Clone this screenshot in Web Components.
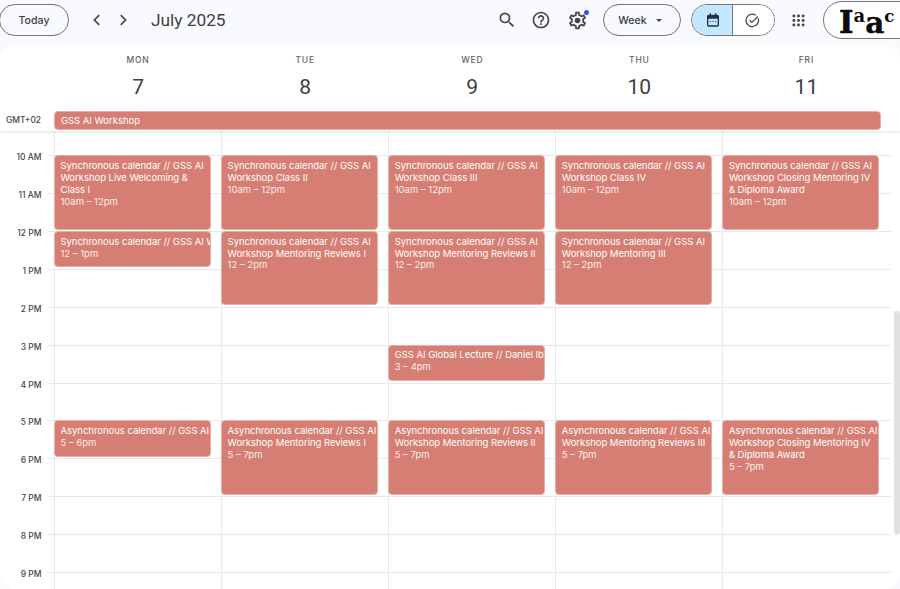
<!DOCTYPE html>
<html><head><meta charset="utf-8">
<style>
html,body{margin:0;padding:0;background:#f8fafd;overflow:hidden}
body{font-family:Inter,"Liberation Sans",sans-serif}
</style></head><body>
<gcal-app>
  <gcal-header slot="header"></gcal-header>
  <gcal-panel>
    <day-head name="MON" num="7"></day-head>
    <day-head name="TUE" num="8"></day-head>
    <day-head name="WED" num="9"></day-head>
    <day-head name="THU" num="10"></day-head>
    <day-head name="FRI" num="11"></day-head>
    <time-grid slot="grid">
      <day-col>
        <cal-event start="0" dur="2" time="10am – 12pm">Synchronous calendar // GSS AI Workshop Live Welcoming &amp; Class I</cal-event>
        <cal-event start="2" dur="1" nowrap time="12 – 1pm">Synchronous calendar // GSS AI Workshop</cal-event>
        <cal-event start="7" dur="1" nowrap time="5 – 6pm">Asynchronous calendar // GSS AI Workshop</cal-event>
      </day-col>
      <day-col>
        <cal-event start="0" dur="2" time="10am – 12pm">Synchronous calendar // GSS AI Workshop Class II</cal-event>
        <cal-event start="2" dur="2" time="12 – 2pm">Synchronous calendar // GSS AI Workshop Mentoring Reviews I</cal-event>
        <cal-event start="7" dur="2" time="5 – 7pm">Asynchronous calendar // GSS AI Workshop Mentoring Reviews I</cal-event>
      </day-col>
      <day-col>
        <cal-event start="0" dur="2" time="10am – 12pm">Synchronous calendar // GSS AI Workshop Class III</cal-event>
        <cal-event start="2" dur="2" time="12 – 2pm">Synchronous calendar // GSS AI Workshop Mentoring Reviews II</cal-event>
        <cal-event start="5" dur="1" nowrap time="3 – 4pm">GSS AI Global Lecture // Daniel Ibañez</cal-event>
        <cal-event start="7" dur="2" time="5 – 7pm">Asynchronous calendar // GSS AI Workshop Mentoring Reviews II</cal-event>
      </day-col>
      <day-col>
        <cal-event start="0" dur="2" time="10am – 12pm">Synchronous calendar // GSS AI Workshop Class IV</cal-event>
        <cal-event start="2" dur="2" time="12 – 2pm">Synchronous calendar // GSS AI Workshop Mentoring III</cal-event>
        <cal-event start="7" dur="2" time="5 – 7pm">Asynchronous calendar // GSS AI Workshop Mentoring Reviews III</cal-event>
      </day-col>
      <day-col>
        <cal-event start="0" dur="2" time="10am – 12pm">Synchronous calendar // GSS AI Workshop Closing Mentoring IV<br>&amp; Diploma Award</cal-event>
        <cal-event start="7" dur="2" time="5 – 7pm">Asynchronous calendar // GSS AI Workshop Closing Mentoring IV<br>&amp; Diploma Award</cal-event>
      </day-col>
    </time-grid>
  </gcal-panel>
</gcal-app>
<script>
const FONT='Inter,"Liberation Sans",sans-serif';
function def(name,html,extra){
  customElements.define(name,class extends HTMLElement{
    constructor(){super();this.attachShadow({mode:'open'});}
    connectedCallback(){
      const h=typeof html==='function'?html(this):html;
      this.shadowRoot.innerHTML=h;
      if(extra)extra(this);
    }
  });
}
const ICON={
 search:'<path d="M15.5 14h-.79l-.28-.27A6.471 6.471 0 0 0 16 9.5 6.5 6.5 0 1 0 9.5 16c1.61 0 3.09-.59 4.23-1.57l.27.28v.79l5 4.99L20.49 19l-4.99-5zm-6 0C7.01 14 5 11.99 5 9.5S7.01 5 9.5 5 14 7.01 14 9.5 11.99 14 9.5 14z"/>',
 help:'<path d="M11 18h2v-2h-2v2zm1-16C6.48 2 2 6.48 2 12s4.48 10 10 10 10-4.48 10-10S17.52 2 12 2zm0 18c-4.41 0-8-3.59-8-8s3.59-8 8-8 8 3.59 8 8-3.59 8-8 8zm0-14c-2.21 0-4 1.79-4 4h2c0-1.1.9-2 2-2s2 .9 2 2c0 2-3 1.75-3 5h2c0-2.25 3-2.5 3-5 0-2.21-1.79-4-4-4z"/>',
 gear:'<path d="M19.43 12.98c.04-.32.07-.64.07-.98 0-.34-.03-.66-.07-.98l2.11-1.65c.19-.15.24-.42.12-.64l-2-3.46c-.09-.16-.26-.25-.44-.25-.06 0-.12.01-.17.03l-2.49 1c-.52-.4-1.08-.73-1.69-.98l-.38-2.65C14.46 2.18 14.25 2 14 2h-4c-.25 0-.46.18-.49.42l-.38 2.65c-.61.25-1.17.59-1.69.98l-2.49-1c-.06-.02-.12-.03-.18-.03-.17 0-.34.09-.43.25l-2 3.46c-.13.22-.07.49.12.64l2.11 1.65c-.04.32-.07.65-.07.98 0 .33.03.66.07.98l-2.11 1.65c-.19.15-.24.42-.12.64l2 3.46c.09.16.26.25.44.25.06 0 .12-.01.17-.03l2.49-1c.52.4 1.08.73 1.69.98l.38 2.65c.03.24.24.42.49.42h4c.25 0 .46-.18.49-.42l.38-2.65c.61-.25 1.17-.59 1.69-.98l2.49 1c.06.02.12.03.18.03.17 0 .34-.09.43-.25l2-3.46c.12-.22.07-.49-.12-.64l-2.11-1.65zm-1.98-1.71c.04.31.05.52.05.73 0 .21-.02.43-.05.73l-.14 1.13.89.7 1.08.84-.7 1.21-1.27-.51-1.04-.42-.9.68c-.43.32-.84.56-1.25.73l-1.06.43-.16 1.13-.2 1.35h-1.4l-.19-1.35-.16-1.13-1.06-.43c-.43-.18-.83-.41-1.23-.71l-.91-.7-1.06.43-1.27.51-.7-1.21 1.08-.84.89-.7-.14-1.13c-.03-.31-.05-.54-.05-.74s.02-.43.05-.73l.14-1.13-.89-.7-1.08-.84.7-1.21 1.27.51 1.04.42.9-.68c.43-.32.84-.56 1.25-.73l1.06-.43.16-1.13.2-1.35h1.39l.19 1.35.16 1.13 1.06.43c.43.18.83.41 1.23.71l.91.7 1.06-.43 1.27-.51.7 1.21-1.07.85-.89.7.14 1.13z"/><circle cx="12" cy="12" r="3.2"/>',
 apps:[5.5,12,18.5].flatMap(y=>[5.5,12,18.5].map(x=>`<circle cx="${x}" cy="${y}" r="2.1"/>`)).join(''),
 left:'<path d="M15 5.5 8.5 12l6.5 6.5" fill="none" stroke="currentColor" stroke-width="2.2"/>',
 right:'<path d="M9 5.5 15.5 12 9 18.5" fill="none" stroke="currentColor" stroke-width="2.2"/>',
 cal:'<path d="M7 2h2v2h6V2h2v2h1.5A2.5 2.5 0 0 1 21 6.5v13a2.5 2.5 0 0 1-2.5 2.5h-13A2.5 2.5 0 0 1 3 19.5v-13A2.5 2.5 0 0 1 5.5 4H7V2zM5 10v9.5c0 .28.22.5.5.5h13a.5.5 0 0 0 .5-.5V10H5z"/><circle cx="8" cy="14" r="1"/><circle cx="12" cy="14" r="1"/><circle cx="16" cy="14" r="1"/>',
 task:'<path d="M21 8.4A10 10 0 1 1 17.3 3.6" fill="none" stroke="currentColor" stroke-width="2"/><path d="M7.5 11.5 11 15l9.5-9.5" fill="none" stroke="currentColor" stroke-width="2"/>'
};
const svg=(n,s,c)=>`<svg width="${s}" height="${s}" viewBox="0 0 24 24" fill="currentColor" style="color:${c};display:block">${ICON[n]}</svg>`;

def('gcal-app',`<style>
:host{display:flex;flex-direction:column;width:900px;height:589px;overflow:hidden;background:#f8fafd;position:relative;font-family:${FONT}}
</style><slot name="header"></slot><slot></slot>`);

def('gcal-header',`<style>
:host{display:flex;align-items:center;height:40px;margin-bottom:5px;flex:none;color:#1f1f1f}
.pill{display:flex;align-items:center;justify-content:center;box-sizing:border-box;height:32px;border:1px solid #747775;border-radius:16px;font-size:10.6px;font-weight:500;color:#3c4043;flex:none}
.today{width:70px;margin-left:-1px}
.ib{width:24px;height:24px;display:flex;align-items:center;justify-content:center;flex:none;position:relative}
.title{font-family:Roboto,sans-serif;font-size:17.3px;font-weight:400;color:#3c4043;margin-left:16px;flex:1}
.week{width:78px;gap:9px;padding-right:4px;margin-left:14px}
.caret{width:0;height:0;border-left:3.5px solid transparent;border-right:3.5px solid transparent;border-top:3.5px solid #444746}
.dot{position:absolute;width:5px;height:5px;border-radius:50%;background:#2a5bdc;top:1.5px;right:.5px}
.toggle{display:flex;box-sizing:border-box;width:84px;height:32px;border:1px solid #747775;border-radius:16px;overflow:hidden;margin-left:10px;flex:none}
.toggle div{flex:1;display:flex;align-items:center;justify-content:center}
.toggle .on{background:#c2e7ff;border-right:1px solid #747775;flex:none;width:41px;padding-left:2px;box-sizing:border-box}
.toggle .off{background:#fff;padding-right:2px}
.logoclip{width:77px;height:40px;margin-left:13px;overflow:hidden;flex:none;display:flex;align-items:center}
.logo{box-sizing:border-box;width:110px;height:38px;flex:none;border:1px solid #747775;border-radius:19px;background:#fff;padding-left:15px;font-family:"DejaVu Serif","Liberation Serif",serif;font-weight:700;color:#0b0b0b;line-height:28px;white-space:nowrap;font-size:0}
.logo .I{font-size:31px;-webkit-text-stroke:.6px #0b0b0b}
.logo .s{font-size:18px;vertical-align:10.5px}
.logo .c{font-size:16.5px;vertical-align:11px}
.logo .a{font-size:29.5px;-webkit-text-stroke:.4px #0b0b0b}
</style>
<div class="pill today">Today</div>
<div class="ib" style="margin-left:16px">${svg('left',18,'#444746')}</div>
<div class="ib" style="margin-left:2px">${svg('right',18,'#444746')}</div>
<div class="title">July 2025</div>
<div class="ib">${svg('search',20,'#444746')}</div>
<div class="ib" style="margin-left:10px">${svg('help',20,'#444746')}</div>
<div class="ib" style="margin-left:12px">${svg('gear',21,'#444746')}<span class="dot"></span></div>
<div class="pill week"><span>Week</span><span class="caret"></span></div>
<div class="toggle"><div class="on">${svg('cal',16,'#1d2f4f')}</div><div class="off">${svg('task',15,'#444746')}</div></div>
<div class="ib" style="margin-left:11px">${svg('apps',17,'#444746')}</div>
<div class="logoclip"><div class="logo"><span class="I">I</span><span class="s">a</span><span class="a">a</span><span class="c">c</span></div></div>`);

def('gcal-panel',`<style>
:host{display:flex;flex-direction:column;flex:1;min-height:0;background:#fff;border-radius:16px;overflow:hidden;position:relative}
.heads{display:grid;grid-template-columns:54.5px repeat(5,167.1px);height:66px;flex:none}
.allday{display:flex;align-items:flex-start;height:20px;flex:none;box-shadow:0 1.5px 2px rgba(60,64,67,.1);position:relative;z-index:2;background:#fff}
.tz{width:54px;box-sizing:border-box;padding:3px 0 0 6px;font-size:8.4px;font-weight:500;color:#444746;flex:none;line-height:12px}
.bar{box-sizing:border-box;width:827px;height:18.5px;background:#d67e73;border:.5px solid #e6aea6;border-radius:4px;color:#fff;font-size:9.5px;line-height:17px;padding-left:6px;letter-spacing:-.03px}
.scroll{position:absolute;right:0;top:266px;width:6px;height:224px;background:#e1e1e1;border-radius:3px;z-index:3}
</style>
<div class="heads"><span></span><slot></slot></div>
<div class="allday"><div class="tz">GMT+02</div><div class="bar">GSS AI Workshop</div></div>
<slot name="grid"></slot>
<div class="scroll"></div>`);

def('day-head',el=>`<style>
:host{display:flex;flex-direction:column;align-items:center;box-sizing:border-box}
.n{font-size:8.5px;font-weight:500;letter-spacing:.8px;color:#5f6368;line-height:12px;margin-top:9px}
.d{font-family:Roboto,sans-serif;font-size:21px;font-weight:400;color:#3c4043;line-height:28px;margin-top:7px}
</style><div class="n">${el.getAttribute('name')}</div><div class="d">${el.getAttribute('num')}</div>`);

def('time-grid',()=>{
  const labels=['10 AM','11 AM','12 PM','1 PM','2 PM','3 PM','4 PM','5 PM','6 PM','7 PM','8 PM','9 PM'];
  return `<style>
:host{display:block;position:relative;flex:1;min-height:0;--h:37.87px;overflow:hidden}
.rows{padding-top:24.4px}
.row{height:var(--h);box-sizing:border-box;border-top:1px solid #e6e9f0;margin-left:48px;width:842.5px;position:relative}
.row span{position:absolute;right:calc(100% + 6.5px);top:-5px;white-space:nowrap;font-size:8.5px;font-weight:500;line-height:12px;color:#444746}
.days{position:absolute;left:54px;top:0;bottom:0;display:grid;grid-template-columns:repeat(5,167.1px)}
</style><div class="rows">${labels.map(l=>`<div class="row"><span>${l}</span></div>`).join('')}</div><div class="days"><slot></slot></div>`;
});

def('day-col',`<style>
:host{display:block;position:relative;border-left:1px solid #e6e9f0;box-sizing:border-box}
</style><slot></slot>`);

def('cal-event',el=>{
  const s=+el.getAttribute('start'),d=+el.getAttribute('dur'),nw=el.hasAttribute('nowrap');
  return `<style>
:host{position:absolute;display:block;box-sizing:border-box;left:-1px;width:157px;top:calc(24.4px + var(--h) * ${s});height:calc(var(--h) * ${d} - 1.6px);background:#d67e73;border:.5px solid #e6aea6;border-radius:4px;padding:3.5px 0 0 5.5px;color:#fff;font-size:9.5px;line-height:11.9px;letter-spacing:-.03px;overflow:hidden}
.t{margin-right:-1px;${nw?'white-space:nowrap;overflow:hidden;margin-right:0':''}}
.w{opacity:.88;letter-spacing:0}
</style><div class="t"><slot></slot></div><div class="w">${el.getAttribute('time')}</div>`;
});
</script>
</body></html>
